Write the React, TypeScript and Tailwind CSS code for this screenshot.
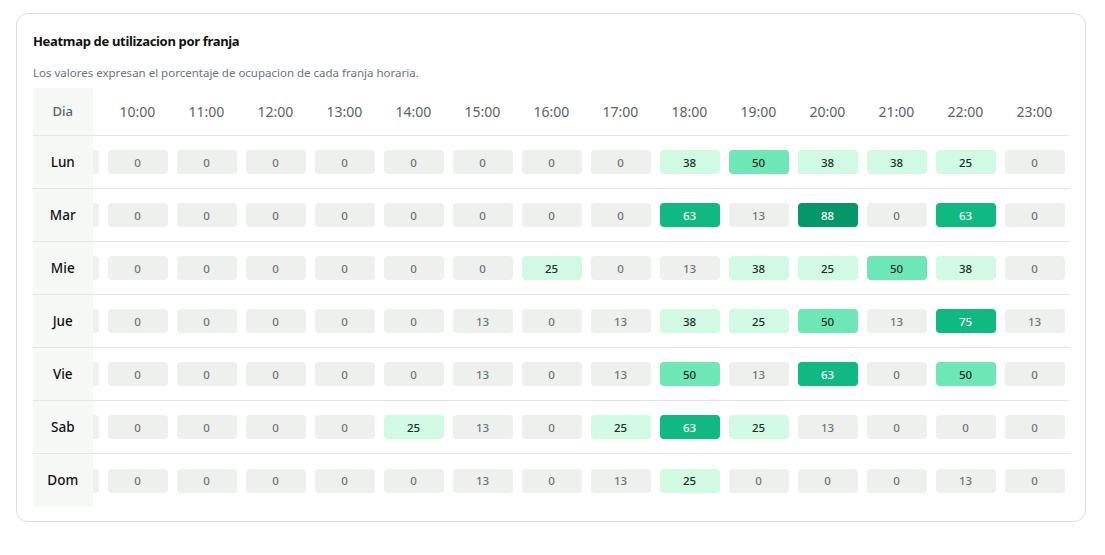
import { useEffect, useRef } from "react";

const hours = ["09:00", "10:00", "11:00", "12:00", "13:00", "14:00", "15:00", "16:00", "17:00", "18:00", "19:00", "20:00", "21:00", "22:00", "23:00"];

const rows: [string, number[]][] = [
  ["Lun", [0, 0, 0, 0, 0, 0, 0, 0, 0, 38, 50, 38, 38, 25, 0]],
  ["Mar", [0, 0, 0, 0, 0, 0, 0, 0, 0, 63, 13, 88, 0, 63, 0]],
  ["Mie", [0, 0, 0, 0, 0, 0, 0, 25, 0, 13, 38, 25, 50, 38, 0]],
  ["Jue", [0, 0, 0, 0, 0, 0, 13, 0, 13, 38, 25, 50, 13, 75, 13]],
  ["Vie", [0, 0, 0, 0, 0, 0, 13, 0, 13, 50, 13, 63, 0, 50, 0]],
  ["Sab", [0, 0, 0, 0, 0, 25, 13, 0, 25, 63, 25, 13, 0, 0, 0]],
  ["Dom", [0, 0, 0, 0, 0, 0, 13, 0, 13, 25, 0, 0, 0, 13, 0]],
];

function cellClass(v: number) {
  if (v >= 80) return "bg-[#059669] text-white";
  if (v >= 60) return "bg-[#10b981] text-white";
  if (v >= 45) return "bg-[#6ee7b7] text-[#1f2d27]";
  if (v >= 20) return "bg-[#d1fae5] text-[#1f2d27]";
  return "bg-[#eef0ee] text-[#6b7672]";
}

export default function App() {
  const scroller = useRef<HTMLDivElement>(null);

  useEffect(() => {
    if (scroller.current) scroller.current.scrollLeft = scroller.current.scrollWidth;
  }, []);

  return (
    <div className="min-h-screen bg-white p-4 pt-[13px] font-['Inter',sans-serif]">
      <div className="rounded-xl border border-[#dcdfdc] bg-white px-4 pt-[18px] pb-[14px] w-[1070px]">
        <h2 className="text-[13px] font-bold text-[#111] tracking-tight">Heatmap de utilizacion por franja</h2>
        <p className="mt-[12px] text-[11.5px] text-[#6b7280]">Los valores expresan el porcentaje de ocupacion de cada franja horaria.</p>

        <div
          ref={scroller}
          className="mt-[7px] overflow-x-scroll w-[1036px] [&::-webkit-scrollbar]:h-[12px] [&::-webkit-scrollbar-track]:bg-[#f7f7f7] [&::-webkit-scrollbar-thumb]:bg-[#8a8a8a] [&::-webkit-scrollbar-thumb]:rounded-full [&::-webkit-scrollbar-thumb]:border-[3px] [&::-webkit-scrollbar-thumb]:border-solid [&::-webkit-scrollbar-thumb]:border-[#f7f7f7]"
        >
          <table className="border-collapse">
            <thead>
              <tr className="h-[48px]">
                <th className="sticky left-0 z-10 w-[60px] min-w-[60px] bg-[#f6f8f6] border-r border-[#e2e5e2] text-[13px] font-medium text-[#5b6360] text-center">
                  Dia
                </th>
                {hours.map((h) => (
                  <th key={h} className="min-w-[69px] w-[69px] text-[14px] font-normal text-[#5b6360] text-center">
                    {h}
                  </th>
                ))}
              </tr>
            </thead>
            <tbody>
              {rows.map(([day, vals]) => (
                <tr key={day} className="h-[53px] border-t border-[#e2e5e2]">
                  <td className="sticky left-0 z-10 bg-[#f6f8f6] border-r border-[#e2e5e2] text-[13.5px] font-medium text-[#111] text-center">
                    {day}
                  </td>
                  {vals.map((v, i) => (
                    <td key={i} className="px-[4.5px]">
                      <div className={`h-[24px] rounded-[4px] flex items-center justify-center text-[11.5px] font-medium ${cellClass(v)}`}>
                        {v}
                      </div>
                    </td>
                  ))}
                </tr>
              ))}
            </tbody>
          </table>
        </div>
      </div>
    </div>
  );
}
